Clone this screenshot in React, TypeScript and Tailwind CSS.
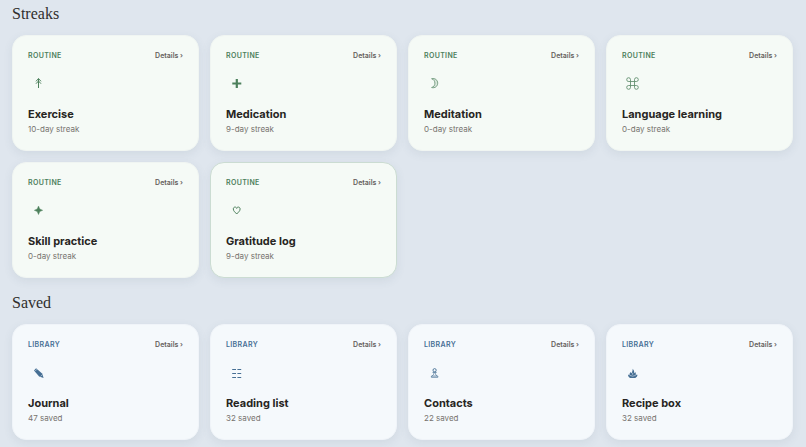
import React from 'react';

type Item = { title: string; note: string; icon: React.ReactNode; active?: boolean };

const streaks: Item[] = [
  {
    title: 'Exercise',
    note: '10-day streak',
    icon: <path d="M10.500 15V5.500M8 8.300l2.500-2.700L13 8.300M8 10.700L10.500 8l2.500 2.700" />,
  },
  {
    title: 'Medication',
    note: '9-day streak',
    icon: <path d="M10.8 6v9M6.3 10.5h9" strokeWidth="2.2" />,
  },
  {
    title: 'Meditation',
    note: '0-day streak',
    icon: <path d="M7.6 5.700c3.600-.7 6.100 1.400 6.100 4.500s-2.900 5.300-6.100 4.300c2.300-.6 3.300-2.300 3.300-4.300S9.800 6.400 7.600 5.700z" fill="currentColor" fillOpacity=".2" strokeWidth=".9" opacity=".8" />,
  },
  {
    title: 'Language learning',
    note: '0-day streak',
    icon: (
      <path
        d="M8.500 8.500h4v4h-4zM8.500 8.500H6.900a1.900 1.900 0 1 1 1.600-1.900zM12.500 8.500V6.600a1.900 1.900 0 1 1 1.900 1.900zM12.500 12.500h1.900a1.900 1.900 0 1 1-1.900 1.900zM8.500 12.500v1.900a1.900 1.900 0 1 1-1.900-1.900z"
        strokeWidth=".9"
        opacity=".85"
      />
    ),
  },
  {
    title: 'Skill practice',
    note: '0-day streak',
    icon: <path d="M10.5 6l1.300 3 2.900 1.300-2.900 1.300-1.300 3-1.300-3-2.900-1.300L9.200 9z" fill="currentColor" strokeWidth=".4" />,
  },
  {
    title: 'Gratitude log',
    note: '9-day streak',
    icon: <path d="M10.700 14C9.500 12.400 7.300 11.300 7.300 9c0-2.300 2.900-2.600 3.400-.6.500-2 3.400-1.700 3.400.6 0 2.300-2.200 3.400-3.400 5z" />,
    active: true,
  },
];

const saved: Item[] = [
  {
    title: 'Journal',
    note: '47 saved',
    icon: (
      <>
        <path d="M6 8.500l2.100-2.200 6 5.100 1.500 4.500-4.500-1.500z" fill="currentColor" stroke="none" />
        <path d="M9 7.200L7.200 9M14.100 12.900l-1.600 1.500" stroke="#f5f9fc" strokeWidth=".5" />
      </>
    ),
  },
  {
    title: 'Reading list',
    note: '32 saved',
    icon: <path d="M6.200 7.500H10M11.400 7.500h3.800M6.200 11.500H10M11.400 11.500h3.800M6.200 15.500H10M11.400 15.500h3.800" strokeWidth="1.200" />,
  },
  {
    title: 'Contacts',
    note: '22 saved',
    icon: (
      <>
        <circle cx="10.600" cy="8.200" r="1.600" strokeWidth=".9" />
        <path d="M8.500 10.400h4.200M9.900 10.400c0 1.800-.4 2.600-1.700 3.400M11.300 10.400c0 1.800.4 2.600 1.700 3.400M7.400 15.300h6.400V14H7.400z" strokeWidth=".9" opacity=".8" />
      </>
    ),
  },
  {
    title: 'Recipe box',
    note: '32 saved',
    icon: (
      <>
        <path
          d="M10.700 6.800c1.400 1.500 1.900 3.100 1.100 4.700.7-.3 1.100-.8 1.300-1.400.8.900.9 1.900.5 2.700h1.900c-.1 1.500-.9 2.500-2.200 3.200H8.200c-1.300-.6-2.100-1.700-2.200-3.200h1.800c-.3-1-.1-2.100.8-2.900.1.600.4 1 .8 1.300.9-1.300 1.300-2.800 1.300-4.400z"
          fill="currentColor"
          stroke="none"
        />
        <path d="M7.600 13.300l3.100.9 3.100-.9M10.600 10.800v2" stroke="#f5f9fc" strokeWidth=".5" />
      </>
    ),
  },
];

const tones = {
  routine: { card: 'bg-[#f5faf6]', accent: 'text-[#4d805c]', border: 'border-[#f0f5f2]' },
  library: { card: 'bg-[#f5f9fc]', accent: 'text-[#466f94]', border: 'border-[#f0f4f9]' },
};

function Card({ item, tone }: { item: Item; tone: 'routine' | 'library' }) {
  const t = tones[tone];
  return (
    <article
      className={`rounded-[14px] border p-[15px] shadow-[0_3px_10px_rgba(70,90,110,0.09)] ${t.card} ${item.active ? 'border-[#cbdcd2]' : t.border}`}
    >
      <div className="flex items-center justify-between leading-[10px]">
        <span className={`text-[7px] font-semibold tracking-wider uppercase ${t.accent}`}>{tone}</span>
        <button type="button" className="text-[7px] font-semibold text-[#655f5c]">
          Details ›
        </button>
      </div>
      <svg
        viewBox="0 0 21 21"
        className={`mt-[12px] h-[21px] w-[21px] ${t.accent}`}
        fill="none"
        stroke="currentColor"
        strokeWidth="1"
        aria-hidden="true"
      >
        {item.icon}
      </svg>
      <h3 className="mt-[13px] text-[11px] leading-[14px] font-bold text-[#272522]">{item.title}</h3>
      <p className="mt-[2px] text-[8px] leading-[12px] text-[#77736f]">{item.note}</p>
    </article>
  );
}

function Section({ title, items, tone }: { title: string; items: Item[]; tone: 'routine' | 'library' }) {
  return (
    <section>
      <h2 className="mb-[11px] font-['Liberation_Serif',serif] text-[16px] leading-[20px] text-[#302e2c]">{title}</h2>
      <div className="grid grid-cols-4 gap-[11px]">
        {items.map((item) => (
          <Card key={item.title} item={item} tone={tone} />
        ))}
      </div>
    </section>
  );
}

export default function App() {
  return (
    <main className="flex min-h-screen flex-col gap-[15px] bg-[#dfe6ee] pt-1 pr-[13px] pb-[7px] pl-3 font-['Inter',sans-serif]">
      <Section title="Streaks" items={streaks} tone="routine" />
      <Section title="Saved" items={saved} tone="library" />
    </main>
  );
}
